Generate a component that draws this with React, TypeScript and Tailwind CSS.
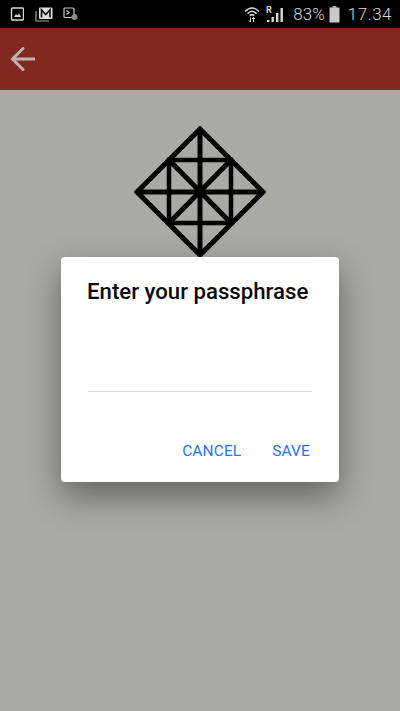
export default function App() {
  return (
    <div className="flex h-[711px] w-[400px] flex-col overflow-hidden bg-[#a9aaa5] font-['Roboto',sans-serif]">
      {/* Status bar */}
      <div className="flex h-7 items-center justify-between bg-black pl-[10px] pr-[8px] text-[#d6d6d6]">
        <div className="flex items-center">
          <svg width="14" height="14" viewBox="0 0 14 14" fill="none">
            <rect x="1.5" y="1" width="12" height="12" rx="1" stroke="#d8d8d8" strokeWidth="1.4" />
            <path d="M4 10 L6 7 L7.5 8.5 L9 6.5 L11 10 Z" fill="#d8d8d8" />
          </svg>
          <svg width="18" height="15" viewBox="0 0 18 15" fill="none" className="ml-[11px]">
            <path d="M1 4 V14 H14" stroke="#a8a8a8" strokeWidth="1.2" />
            <rect x="4" y="0.5" width="13.5" height="11.5" rx="1" fill="#e0e0e0" />
            <path d="M6.5 10.5 V3 L10.75 7.5 L15 3 V10.5" stroke="#111" strokeWidth="1.7" />
          </svg>
          <svg width="15" height="14" viewBox="0 0 15 14" fill="none" className="ml-[10px]">
            <rect x="1" y="1" width="10" height="9.5" rx="1" stroke="#c8c8c8" strokeWidth="1.2" />
            <path d="M3.5 3.5 L6 5.5 L3.5 7.5" stroke="#c8c8c8" strokeWidth="1.2" />
            <circle cx="11.5" cy="10" r="3" fill="#8c8c8c" />
          </svg>
        </div>
        <div className="flex items-center">
          <svg width="16" height="18" viewBox="0 0 16 18" fill="none" className="mr-[6px]">
            <path d="M1 6.5 Q8 -0.5 15 6.5" stroke="#d8d8d8" strokeWidth="1.5" />
            <path d="M3.5 8.7 Q8 4 12.5 8.7" stroke="#d8d8d8" strokeWidth="1.5" />
            <path d="M5.8 10.6 Q8 8.6 10.2 10.6" stroke="#d8d8d8" strokeWidth="1.5" />
            <path d="M6.5 12.5 V17 M5 15.5 L6.5 17 M9.5 17 V12.5 M8 14 L9.5 12.5 L11 14" stroke="#d8d8d8" strokeWidth="1" />
          </svg>
          <svg width="18" height="18" viewBox="0 0 18 18" className="mr-[9px]">
            <text x="0" y="8" fontSize="9" fontWeight="700" fill="#d8d8d8" fontFamily="Roboto, sans-serif">R</text>
            <rect x="1" y="15" width="2.4" height="2" fill="#d8d8d8" />
            <rect x="5.5" y="12" width="2.4" height="5" fill="#d8d8d8" />
            <rect x="10" y="8" width="2.4" height="9" fill="#d8d8d8" />
            <rect x="14.5" y="3" width="2.4" height="14" fill="#d8d8d8" />
          </svg>
          <span className="text-[17px] leading-none font-light">83%</span>
          <svg width="11" height="17" viewBox="0 0 11 17" className="ml-[4px] mr-[8px]">
            <rect x="3.5" y="0" width="4" height="2" fill="#9a9a9a" />
            <rect x="0.5" y="1.5" width="10" height="15" fill="#c9c9c9" />
          </svg>
          <span className="text-[17px] leading-none font-light tracking-[0.5px]">17.34</span>
        </div>
      </div>

      {/* App bar */}
      <div className="flex h-[62px] items-center bg-[#832a20] pl-[10px]">
        <svg width="25" height="26" viewBox="0 0 25 26" fill="none">
          <path d="M24.5 13 H2.5 M13 2.5 L2.5 13 L13 23.5" stroke="#bdb3b0" strokeWidth="3" strokeLinecap="round" />
        </svg>
      </div>

      {/* Logo */}
      <div className="flex justify-center pt-9">
        <svg width="132" height="132" viewBox="0 0 132 132" fill="none" stroke="#000" strokeWidth="5">
          <path d="M66 3 L129 66 L66 129 L3 66 Z" />
          <path d="M66 3 V129 M3 66 H129" />
          <path d="M35 34 H97 V97 H35 Z" strokeWidth="4.5" />
          <path d="M35 34 L97 97 M97 34 L35 97" />
        </svg>
      </div>

      {/* Passphrase dialog */}
      <div className="mx-auto -mt-[1px] flex h-[225px] w-[278px] flex-col rounded-[4px] bg-white px-[26px] shadow-[0_14px_34px_rgba(0,0,0,0.42)]">
        <h2 className="mt-[19px] text-[22.2px] leading-[30px] font-medium whitespace-nowrap text-[#0a0a0a]">
          Enter your passphrase
        </h2>
        <div className="mt-[85px] ml-px h-px w-[224px] bg-[#d9d9d9]" />
        <div className="mt-[50px] flex justify-end gap-[31px] pr-[3px] text-[15.5px] leading-[18px] font-normal tracking-[0.1px] text-[#1f75fb]">
          <span>CANCEL</span>
          <span>SAVE</span>
        </div>
      </div>
    </div>
  );
}
